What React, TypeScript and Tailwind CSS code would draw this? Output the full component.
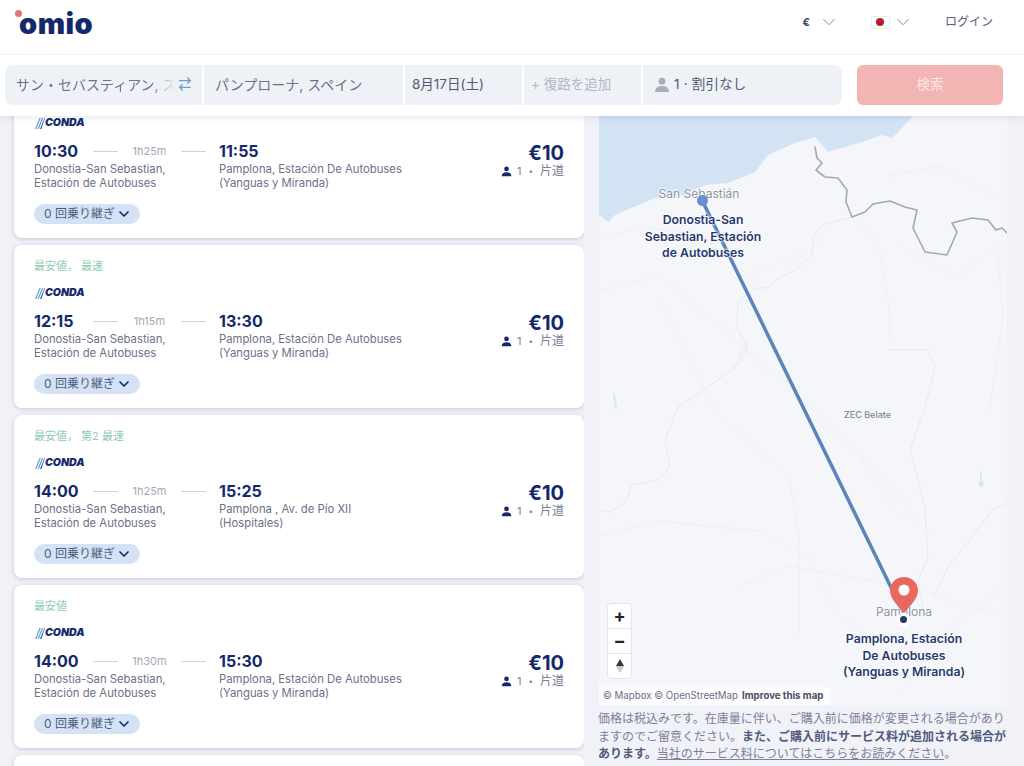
import { ArrowRightLeft, ChevronDown } from 'lucide-react';

const font = "[font-family:Inter,'Noto_Sans_CJK_JP',sans-serif]";

const trips = [
  { tag: '最安値', dep: '10:30', dur: '1h25m', arr: '11:55', to: ['Pamplona, Estación De Autobuses', '(Yanguas y Miranda)'] },
  { tag: '最安値， 最速', dep: '12:15', dur: '1h15m', arr: '13:30', to: ['Pamplona, Estación De Autobuses', '(Yanguas y Miranda)'] },
  { tag: '最安値， 第2 最速', dep: '14:00', dur: '1h25m', arr: '15:25', to: ['Pamplona , Av. de Pío XII', '(Hospitales)'] },
  { tag: '最安値', dep: '14:00', dur: '1h30m', arr: '15:30', to: ['Pamplona, Estación De Autobuses', '(Yanguas y Miranda)'] },
];

const Person = ({ className = '' }: { className?: string }) => (
  <svg viewBox="0 0 16 16" className={className} fill="currentColor">
    <circle cx="8" cy="4.2" r="3.4" />
    <path d="M1 15c0-4 2.8-6 7-6s7 2 7 6z" />
  </svg>
);

// carrier logo: stripes are drawn, the name stays text
const Conda = () => (
  <div className="flex items-center h-[13px] pl-px">
    <svg viewBox="0 0 10 13" className="w-[10px] h-[13px]">
      <path d="M0 12 L4.500 1 H5.800 L1.300 12z M2.500 12 L7 1 H8.300 L3.800 12z" fill="#5aa3dc" />
      <path d="M5 12 L9.500 1 H10 L6.300 12z" fill="#1d4f94" />
    </svg>
    <span className="text-[10.500px] leading-none font-black italic text-[#14296a]">CONDA</span>
  </div>
);

const TripCard = ({ trip }: { trip: (typeof trips)[number] }) => (
  <div className="bg-white rounded-lg shadow-[0_1px_4px_rgba(30,50,100,0.22)] pt-[14px] pb-[14px] px-5">
    <div className="text-[11px] leading-[14px] text-[#8fcbaf]">{trip.tag}</div>
    <div className="mt-[14px]">
      <Conda />
    </div>
    <div className="mt-[11px] flex justify-between">
      <div className="flex">
        <div className="w-[185px]">
          <div className="flex items-center h-5">
            <span className="w-[59px] text-[16px] font-bold text-[#14296a]">{trip.dep}</span>
            <span className="w-[25px] h-px bg-[#cfd3dc]" />
            <span className="mx-[14px] w-[35px] text-center text-[11px] text-[#a3a8b5]">{trip.dur}</span>
            <span className="w-[25px] h-px bg-[#cfd3dc]" />
          </div>
          <div className="mt-px text-[11.300px] leading-[14px] text-[#6b7187]">
            Donostia-San Sebastian,
            <br />
            Estación de Autobuses
          </div>
        </div>
        <div>
          <div className="h-5 flex items-center text-[16px] font-bold text-[#14296a]">{trip.arr}</div>
          <div className="mt-px text-[11.300px] leading-[14px] text-[#6b7187]">
            {trip.to[0]}
            <br />
            {trip.to[1]}
          </div>
        </div>
      </div>
      <div className="text-right">
        <div className="text-[20px] leading-6 font-bold text-[#14296a]">€10</div>
        <div className="flex items-center justify-end h-3 text-[11px] text-[#7b8196]">
          <Person className="w-[11px] h-[11px] text-[#14296a] mr-[5px]" />
          <span>1</span>
          <span className="mx-[7px] text-[8px]">•</span>
          <span className="text-[12px]">片道</span>
        </div>
      </div>
    </div>
    <div className="mt-[14px] w-[106px] h-5 rounded-full bg-[#d3e3f5] pl-[10px] flex items-center gap-px text-[12px] text-[#4f5d7d]">
      <span>0 回乗り継ぎ</span>
      <ChevronDown className="w-4 h-4 text-[#14296a]" strokeWidth={2.5} />
    </div>
  </div>
);

const MapDrawing = () => (
  <svg viewBox="0 0 408 590" className="w-[408px] h-[590px]" fill="none" strokeLinejoin="round" strokeLinecap="round">
    <path
      d="M0 0H314L303 12 293 22 283 19 263 26 229 36 216 21 196 27 169 39 156 56 129 67 106 69 86 79 56 82 16 99 9 106 0 99Z"
      fill="#d2e3f4"
    />
    <g stroke="#eef0f4" strokeWidth="1">
      <path d="M0 120 50 112 100 118 150 160 220 130" />
      <path d="M0 175 60 160 120 210 200 280 260 340 300 400" />
      <path d="M290 60 340 50 400 80M300 130 360 160 398 130 404 200 390 300" />
      <path d="M253 101 280 130 290 190 292 234" />
      <path d="M0 420 60 405 160 415 210 440 240 500 300 540" />
      <path d="M60 180 90 240 120 300 190 360 200 420 200 520" />
      <path d="M260 340 300 380 330 420" />
      <path d="M140 470 190 450 300 470 408 500M300 580 340 520 408 470" />
    </g>
    <g stroke="#e6e9ef" strokeWidth="1">
      <path d="M253 101 223 109 214 122 213 139 196 154 179 162 169 172 156 172 139 186 138 212 149 232 139 249" />
      <path d="M148 227 136 251 109 271 79 291 66 324 71 351 59 364 33 369 26 387 11 396 0 394" />
      <path d="M289 234 329 234 336 251 326 291 311 334 326 391 329 441 319 464 325 500" />
      <path d="M408 387 393 394 373 421 349 451 335 480" />
    </g>
    <path
      d="M216 31 218 42 223 47 217 54 226 61 239 62 248 74 247 86 253 101 266 96 274 88 291 85 306 91 318 94 314 112 326 136 348 139 358 116 353 107 373 102 389 104 397 114 403 112 408 117"
      stroke="#a3a8b2"
      strokeWidth="1.600"
    />
    <path d="M15 278 17 292M382 356 382 367" stroke="#dce8f4" strokeWidth="2" />
    <circle cx="382" cy="368" r="2.500" fill="#d2e3f4" />
    <path d="M103 84 304 496" stroke="#5b84b8" strokeWidth="3.500" />
  </svg>
);

const Pin = () => (
  <svg viewBox="0 0 28 36" className="w-7 h-9">
    <path d="M14 0C6 0 0 6 0 13.500C0 22 9 30 14 36C19 30 28 22 28 13.500C28 6 22 0 14 0Z" fill="#e8685f" />
    <circle cx="14" cy="13" r="5.500" fill="white" />
  </svg>
);

const halo = '[text-shadow:0_0_3px_white,0_0_3px_white,0_0_2px_white]';

export default function App() {
  return (
    <div className={`h-[766px] w-[1024px] overflow-hidden flex flex-col bg-[#f0f2f7] ${font}`}>
      <div className="relative z-10 bg-white shadow-[0_2px_6px_rgba(30,50,100,0.1)]">
        <header className="h-[55px] border-b border-[#f1f2f5] flex items-center">
          <div className="relative ml-[19px] -mt-[8px] text-[29px] leading-none font-black tracking-[0.500px] text-[#14296a]">
            omio
            <span className="absolute -left-[4px] top-[1px] w-[7px] h-[7px] rounded-full bg-[#e8746a]" />
          </div>
          <div className="ml-auto flex items-center text-[#565d75] -mt-[10px]">
            <span className="text-[11px] font-bold text-[#3a4763]">€</span>
            <ChevronDown className="w-[22px] h-[22px] ml-2 text-[#7d8397]" strokeWidth={1} />
            <span className="ml-[31px] w-[19px] h-[13px] border border-[#eceef2] flex items-center justify-center">
              <span className="w-2 h-2 rounded-full bg-[#ad1f2d]" />
            </span>
            <ChevronDown className="w-[22px] h-[22px] ml-[2px] text-[#7d8397]" strokeWidth={1} />
            <span className="ml-[31px] mr-[31px] text-[12px]">ログイン</span>
          </div>
        </header>
        <div className="h-[61px] pt-[10px] pl-[5px] flex">
          <div className="flex gap-[2px] h-10 w-[837px] text-[14px]">
            <div className="w-[197px] bg-[#eef1f6] rounded-l-lg flex items-center pl-[11px] pr-[9px] pb-[2px] gap-[2px] overflow-hidden">
              <span className="flex-1 overflow-hidden whitespace-nowrap text-[#6d7384] [mask-image:linear-gradient(to_right,black_85%,transparent)]">
                サン・セバスティアン, スペイン
              </span>
              <ArrowRightLeft className="w-4 h-4 shrink-0 text-[#6c9ccf]" />
            </div>
            <div className="w-[199px] bg-[#eef1f6] flex items-center pl-[11px] pb-[2px] text-[#6d7384]">パンプローナ, スペイン</div>
            <div className="w-[117px] bg-[#eef1f6] flex items-center pl-[7px] pb-[2px] text-[13.500px] text-[#505a72]">8月17日(土)</div>
            <div className="w-[117px] bg-[#eef1f6] flex items-center pl-[7px] pb-[2px] text-[13.500px] text-[#b1b6c4]">+ 復路を追加</div>
            <div className="flex-1 bg-[#eef1f6] rounded-r-lg flex items-center pl-[11px] text-[13.500px] text-[#505a72]">
              <Person className="w-4 h-4 text-[#a9adbf] mr-1" />
              <span className="-mt-[2px] tracking-[0.200px]">1 · 割引なし</span>
            </div>
          </div>
          <div className="ml-[15px] w-[146px] h-10 rounded-md bg-[#f2b5b3] pb-[2px] flex items-center justify-center text-[13.500px] text-[#fbe7e6]">検索</div>
        </div>
      </div>

      <main className="flex flex-1 min-h-0">
        <div className="w-[584px] pl-[14px] overflow-hidden">
          <div className="-mt-[41px] flex flex-col gap-[7px]">
            {trips.map((t, i) => (
              <TripCard key={i} trip={t} />
            ))}
            <TripCard trip={trips[0]} />
          </div>
        </div>

        <div className="ml-[15px] w-[408px]">
          <div className="relative h-[590px] bg-[#f4f6fa] overflow-hidden">
            <MapDrawing />
            <div className={`absolute left-[100px] top-[69px] -translate-x-1/2 whitespace-nowrap text-[12px] text-[#8f94a3] ${halo}`}>San Sebastián</div>
            <div className="absolute left-[98px] top-[79px] w-[11px] h-[11px] rounded-full bg-[#6492cb]" />
            <div className={`absolute left-[104px] top-[96px] -translate-x-1/2 w-[132px] text-center text-[12.250px] leading-[16.500px] font-semibold text-[#27386e] ${halo}`}>
              Donostia-San Sebastian, Estación de Autobuses
            </div>
            <div className="absolute left-[245px] top-[292px] text-[9px] font-medium text-[#82879a]">ZEC Belate</div>
            <div className={`absolute left-[305px] top-[487px] -translate-x-1/2 text-[12px] text-[#8f94a3] ${halo}`}>Pamplona</div>
            <div className="absolute left-[291px] top-[461px]">
              <Pin />
            </div>
            <div className="absolute left-[301px] top-[500px] w-[7px] h-[7px] rounded-full bg-[#27386e] shadow-[0_0_0_3px_white]" />
            <div className={`absolute left-[305px] top-[515px] -translate-x-1/2 w-[132px] text-center text-[12.250px] leading-[16.500px] font-semibold text-[#27386e] ${halo}`}>
              Pamplona, Estación De Autobuses (Yanguas y Miranda)
            </div>
            <div className="absolute left-2 top-[487px] w-[25px] h-[76px] bg-white rounded border border-[#e3e5ea] flex flex-col divide-y divide-[#e3e5ea] text-[#1f2430]">
              <div className="flex-1 flex items-center justify-center text-[18px] font-bold leading-none">+</div>
              <div className="flex-1 flex items-center justify-center text-[18px] font-bold leading-none">−</div>
              <div className="flex-1 flex flex-col items-center justify-center">
                <span className="w-0 h-0 border-x-[4px] border-x-transparent border-b-[7px] border-b-[#333a44]" />
                <span className="w-0 h-0 border-x-[4px] border-x-transparent border-t-[7px] border-t-[#c6c9cf]" />
              </div>
            </div>
            <div className="absolute left-0 bottom-px h-[18px] w-[231px] bg-white/70 pl-1 flex items-center gap-1 whitespace-nowrap text-[9.700px] text-[#6b7187]">
              <span>© Mapbox © OpenStreetMap</span>
              <span className="font-bold text-[#4a4f5e]">Improve this map</span>
            </div>
          </div>
          <p className="mt-1 -ml-px w-[410px] text-[12px] leading-[17.500px] text-[#7b8196]">
            価格は税込みです。在庫量に伴い、ご購入前に価格が変更される場合がありますのでご留意ください。
            <b className="font-bold text-[#4f5b7d]">また、ご購入前にサービス料が追加される場合があります。</b>
            <span className="underline">当社のサービス料についてはこちらをお読みください</span>。
          </p>
        </div>
      </main>
    </div>
  );
}
